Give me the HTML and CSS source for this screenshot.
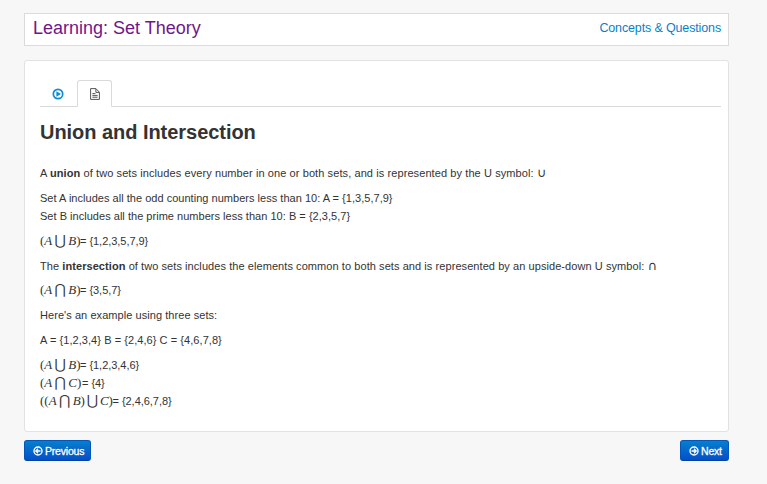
FILE: index.html
```
<!DOCTYPE html>
<html lang="en">
<head>
<meta charset="utf-8">
<title>Learning: Set Theory</title>
<link rel="stylesheet" href="styles.css">
</head>
<body>
<header class="topbar">
  <h1 class="course">Learning: Set Theory</h1>
  <a class="toplink">Concepts &amp; Questions</a>
</header>
<main class="panel">
  <nav class="tabs">
    <a class="tab"><svg class="play" viewBox="0 0 12 12"><circle cx="6" cy="6" r="4.7" fill="none" stroke="#0e8ccf" stroke-width="1.7"/><path d="M4.4 3.3 9 6 4.4 8.7z" fill="#0e8ccf"/></svg></a>
    <a class="tab active"><svg class="doc" viewBox="0 0 10 12"><path d="M.6.6h5.3l3.5 3.6v7.2H.6zM5.9.8v3.6h3.4M2.4 5.6h3M2.4 7.4h5.2M2.4 9.2h5.2" fill="none" stroke="#555" stroke-width="1"/></svg></a>
  </nav>
  <h2 class="title">Union and Intersection</h2>
  <p><span class="l1">A <b>union</b> of two sets includes every number in one or both sets, and is represented by the U symbol: <span class="sym">∪</span></span></p>
  <p><span class="l2">Set A includes all the odd counting numbers less than 10: A = {1,3,5,7,9}</span><br><span class="l2">Set B includes all the prime numbers less than 10: B = {2,3,5,7}</span></p>
  <p><span class="math w1">(<i>A</i><span class="op">⋃</span><i>B</i>)</span><span class="res">= {1,2,3,5,7,9}</span></p>
  <p><span class="l4">The <b>intersection</b> of two sets includes the elements common to both sets and is represented by an upside-down U symbol: <span class="sym">∩</span></span></p>
  <p><span class="math w1">(<i>A</i><span class="op">⋂</span><i>B</i>)</span><span class="res">= {3,5,7}</span></p>
  <p><span class="l5">Here's an example using three sets:</span></p>
  <p><span class="l5">A = {1,2,3,4} B = {2,4,6} C = {4,6,7,8}</span></p>
  <p><span class="math w1">(<i>A</i><span class="op">⋃</span><i>B</i>)</span><span class="res">= {1,2,3,4,6}</span><br><span class="math w2">(<i>A</i><span class="op">⋂</span><i>C</i>)</span><span class="res">= {4}</span><br><span class="math w3">((<i>A</i><span class="op">⋂</span><i>B</i>)<span class="op tight">⋃</span><i>C</i>)</span><span class="res">= {2,4,6,7,8}</span></p>
</main>
<footer class="pager">
  <a class="btn prev"><svg class="arrow" viewBox="0 0 10 10"><circle cx="5" cy="5" r="4" fill="none" stroke="#fff" stroke-width="1.4"/><path d="M7.5 5H3M5 2.8 2.8 5 5 7.2" fill="none" stroke="#fff" stroke-width="1.3"/></svg><span>Previous</span></a>
  <a class="btn next"><svg class="arrow" viewBox="0 0 10 10"><circle cx="5" cy="5" r="4" fill="none" stroke="#fff" stroke-width="1.4"/><path d="M2.5 5H7M5 2.8 7.2 5 5 7.2" fill="none" stroke="#fff" stroke-width="1.3"/></svg><span>Next</span></a>
</footer>
</body>
</html>
```
FILE: styles.css
```
* { box-sizing: border-box; }
body {
  margin: 0;
  padding: 13px 38px 0 24px;
  height: 484px;
  overflow: hidden;
  background: #f7f7f7;
  color: #333;
  font: 11px/18px "Liberation Sans", Arial, sans-serif;
}
.topbar {
  display: flex;
  justify-content: space-between;
  height: 33px;
  padding: 0 7px 0 8px;
  background: #fff;
  border: 1px solid #dbdbdb;
}
.course {
  margin: 0;
  font-size: 18px;
  line-height: 28px;
  font-weight: normal;
  color: #70168a;
}
.toplink {
  font-size: 12.5px;
  letter-spacing: -.14px;
  line-height: 28px;
  color: #0a80c8;
}
.panel {
  height: 372px;
  margin-top: 14px;
  padding: 19px 7px 0 15px;
  background: #fff;
  border: 1px solid #e2e2e2;
  border-radius: 3px;
}
.tabs {
  display: flex;
  height: 27px;
  border-bottom: 1px solid #dadada;
}
.tab {
  display: flex;
  align-items: center;
  justify-content: center;
  width: 35px;
  height: 27px;
}
.tab.active {
  margin-left: 2px;
  background: #fff;
  border: 1px solid #dadada;
  border-bottom-color: #fff;
  border-radius: 3px 3px 0 0;
}
.play { width: 12px; height: 12px; }
.doc { width: 10px; height: 12px; }
.title {
  margin: 12px 0 18px;
  font-size: 20px;
  letter-spacing: -.04px;
  line-height: 27px;
  font-weight: bold;
}
p { margin: 0 0 6.86px; white-space: nowrap; }
.l1 { letter-spacing: .09px; }
.l2 { letter-spacing: .025px; }
.l4 { letter-spacing: .07px; }
.l5 { letter-spacing: .06px; }
.sym {
  font-family: "DejaVu Sans", sans-serif;
  font-size: 12.5px;
  line-height: 1;
}
.math {
  display: inline-block;
  height: 18px;
  vertical-align: top;
  font-family: "Liberation Serif", serif;
  font-size: 13px;
}
.w1 { width: 40px; }
.w2 { width: 42px; }
.w3 { width: 72.5px; }
.res { letter-spacing: -.04px; }
.op {
  display: inline-block;
  width: 16px;
  height: 18px;
  vertical-align: top;
  text-align: center;
  font-family: "DejaVu Sans", sans-serif;
  font-size: 14px;
  line-height: 17px;
}
.op.tight { width: 15px; }
.pager {
  display: flex;
  justify-content: space-between;
  margin-top: 8px;
}
.btn {
  display: flex;
  align-items: center;
  gap: 2px;
  height: 21px;
  padding: 0 7px 0 8px;
  color: #fff;
  font-size: 10.5px;
  letter-spacing: -.2px;
  -webkit-text-stroke: .3px #fff;
  text-shadow: 0 -1px 0 rgba(0, 0, 0, .25);
  background: linear-gradient(#0480cd, #044fcb);
  border: 1px solid #0655b8;
  border-bottom-color: #0343a0;
  border-radius: 3px;
}
.prev { width: 67px; }
.next { width: 49px; }
.arrow { width: 10px; height: 10px; flex: none; }
```
